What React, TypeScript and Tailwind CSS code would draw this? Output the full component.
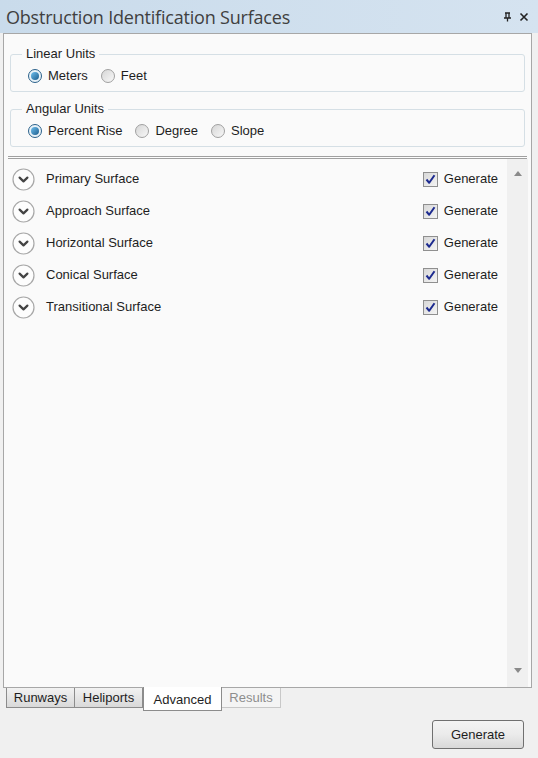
import React from 'react';

const surfaces = [
  'Primary Surface',
  'Approach Surface',
  'Horizontal Surface',
  'Conical Surface',
  'Transitional Surface',
];

const Radio = ({ checked, label }: { checked?: boolean; label: string }) => (
  <label className="flex items-center gap-[6px]">
    <span
      className={`flex h-[14px] w-[14px] items-center justify-center rounded-full border ${
        checked ? 'border-[#2c628b] bg-[#e9f2f8]' : 'border-[#a0a0a0] bg-gradient-to-br from-[#d6d6d6] to-[#f8f8f8]'
      }`}
    >
      {checked && (
        <span className="h-[8px] w-[8px] rounded-full bg-gradient-to-br from-[#6ec0ef] to-[#1b5e8e]" />
      )}
    </span>
    <span>{label}</span>
  </label>
);

const GroupBox = ({ title, children }: { title: string; children: React.ReactNode }) => (
  <div className="relative mx-[6px] rounded-[3px] border border-[#d5dfe5] px-[17px] pb-[5px] pt-[11px]">
    <span className="absolute left-[11px] top-[-9px] bg-[#fafafa] px-[4px] leading-[16px]">{title}</span>
    <div className="flex h-[20px] items-center gap-[13px]">{children}</div>
  </div>
);

const Chevron = () => (
  <svg width="23" height="23" viewBox="0 0 23 23">
    <circle cx="11.5" cy="11.5" r="10.5" fill="#fdfdfd" stroke="#a8a8a8" strokeWidth="1.2" />
    <path d="M7.6 9.6 L11.5 13.4 L15.4 9.6" fill="none" stroke="#444" strokeWidth="2.2" strokeLinecap="round" strokeLinejoin="round" />
  </svg>
);

const CheckBox = () => (
  <span className="flex h-[15px] w-[15px] items-center justify-center border border-[#8f8f8f] bg-gradient-to-br from-[#d8d8d8] to-[#f4f4f4]">
    <svg width="11" height="11" viewBox="0 0 11 11">
      <path d="M1.5 5.5 L4.2 8.8 L9.5 1.2" fill="none" stroke="#1c2a8f" strokeWidth="2" strokeLinejoin="round" />
    </svg>
  </span>
);

export default function App() {
  return (
    <div
      className="flex h-[758px] w-[538px] flex-col bg-[#f0f0f0] text-[13px] text-[#1e1e1e]"
      style={{ fontFamily: '"Liberation Sans", Arial, sans-serif' }}
    >
      {/* title bar */}
      <div className="flex h-[33px] items-center justify-between bg-gradient-to-r from-[#c9dbeb] to-[#d5e3f0] pl-[6px] pr-[9px]">
        <span
          className="text-[18px] leading-none tracking-[-0.2px] text-[#404040]"
          style={{ fontFamily: '"Open Sans", "Noto Sans", sans-serif' }}
        >
          Obstruction Identification Surfaces
        </span>
        <div className="flex items-center gap-[7px] text-[#222]">
          <svg width="9" height="10" viewBox="0 0 9 10">
            <path d="M2 1 H7 M3 1 V6 M6 1 V6 M1 6 H8 M4.5 6 V9.5" fill="none" stroke="#222" strokeWidth="1.3" />
          </svg>
          <svg width="10" height="10" viewBox="0 0 10 10">
            <path d="M1.5 1.5 L8.5 8.5 M8.5 1.5 L1.5 8.5" stroke="#222" strokeWidth="1.6" />
          </svg>
        </div>
      </div>

      {/* main panel */}
      <div className="mx-[3px] mr-[6px] flex h-[655px] flex-col border border-[#a7a7a7] bg-[#fafafa]">
        <div className="flex flex-col gap-[17px] pt-[20px]">
          <GroupBox title="Linear Units">
            <Radio checked label="Meters" />
            <Radio label="Feet" />
          </GroupBox>
          <GroupBox title="Angular Units">
            <Radio checked label="Percent Rise" />
            <Radio label="Degree" />
            <Radio label="Slope" />
          </GroupBox>
        </div>

        <div className="mx-[4px] mt-[9px] h-[3px] border-y border-[#a0a0a0] bg-[#fdfdfd]" />

        <div className="flex min-h-0 flex-1 pl-[4px] pr-[3px]">
          <div className="flex flex-1 flex-col pt-[4px]">
            {surfaces.map((s) => (
              <div key={s} className="flex h-[32px] items-center">
                <span className="ml-[4px]">
                  <Chevron />
                </span>
                <span className="ml-[11px] flex-1">{s}</span>
                <span className="flex items-center gap-[6px] pr-[9px]">
                  <CheckBox />
                  <span>Generate</span>
                </span>
              </div>
            ))}
          </div>
          <div className="flex w-[21px] flex-col items-center justify-between bg-[#f0f0f0] pb-[14px] pt-[12px]">
            <svg width="8" height="5" viewBox="0 0 8 5">
              <path d="M0 5 L4 0 L8 5 Z" fill="#8a8a8a" />
            </svg>
            <svg width="8" height="5" viewBox="0 0 8 5">
              <path d="M0 0 L4 5 L8 0 Z" fill="#8a8a8a" />
            </svg>
          </div>
        </div>
      </div>

      {/* tabs */}
      <div className="flex items-start pl-[6px]">
        <div className="flex h-[20px] w-[69px] items-center justify-center border border-t-0 border-[#8c8c8c] bg-gradient-to-b from-[#f2f2f2] to-[#d9d9d9]">
          Runways
        </div>
        <div className="flex h-[20px] w-[68px] items-center justify-center border border-l-0 border-t-0 border-[#8c8c8c] bg-gradient-to-b from-[#f2f2f2] to-[#d9d9d9]">
          Heliports
        </div>
        <div className="-mt-[1px] flex h-[24px] w-[79px] items-center justify-center border border-t-0 border-[#8c8c8c] bg-white pt-[2px]">
          Advanced
        </div>
        <div className="flex h-[20px] w-[59px] items-center justify-center border border-l-0 border-t-0 border-[#c8c8c8] bg-[#f4f4f4] text-[#8d8d8d]">
          Results
        </div>
      </div>

      <div className="flex justify-end pr-[14px] pt-[9px]">
        <button className="h-[29px] w-[92px] rounded-[3px] border border-[#707070] bg-gradient-to-b from-[#f4f4f4] via-[#ebebeb] to-[#d8d8d8] text-[13px] text-[#1e1e1e]">
          Generate
        </button>
      </div>
    </div>
  );
}
